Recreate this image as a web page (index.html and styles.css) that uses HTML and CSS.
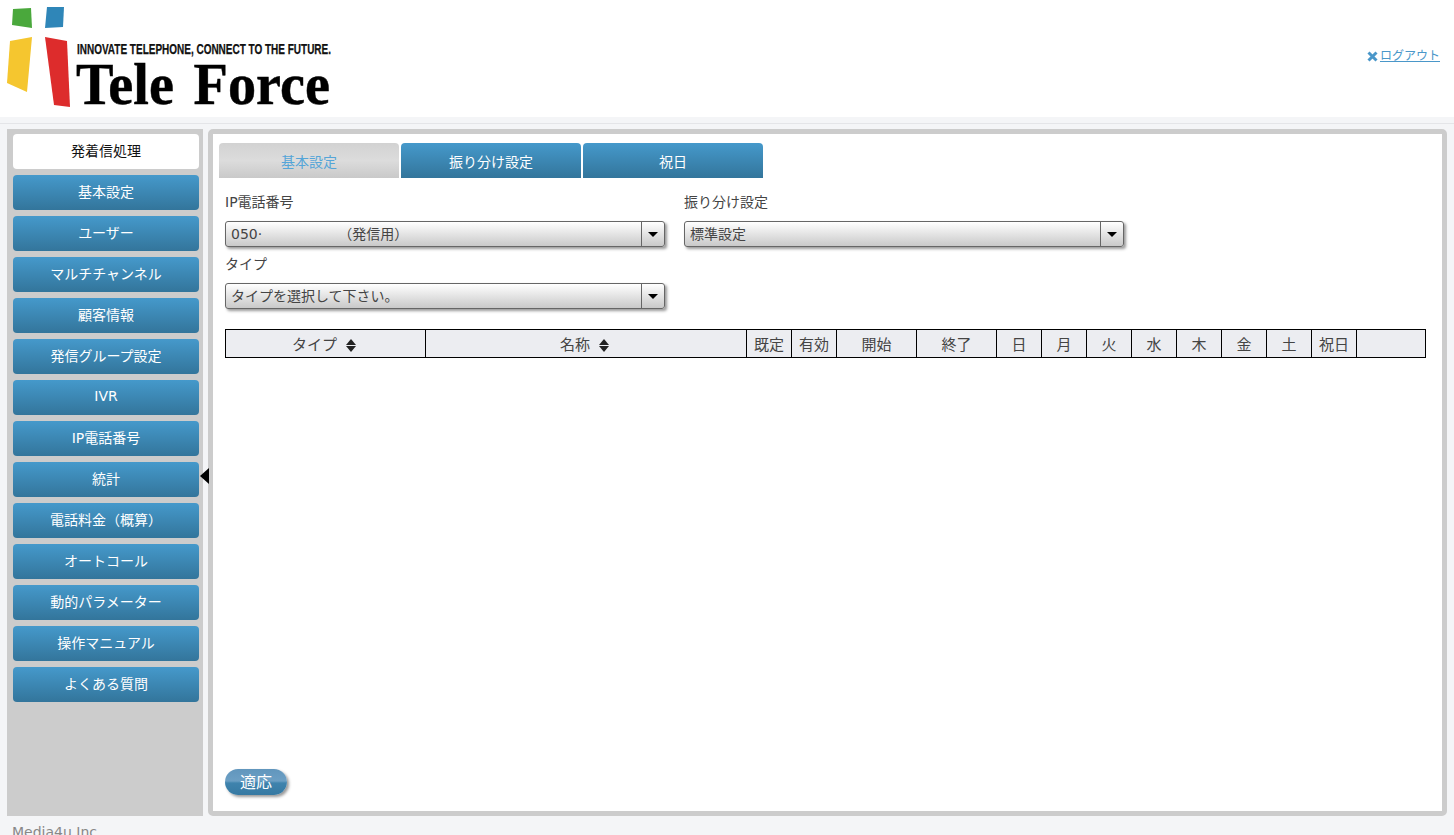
FILE: index.html
```html
<!DOCTYPE html>
<html lang="ja">
<head>
<meta charset="utf-8">
<title>Tele Force</title>
<link rel="stylesheet" href="styles.css">
</head>
<body>
<header class="header">
  <div class="logo">
    <svg class="logo-svg" width="340" height="117" viewBox="0 0 340 117">
      <polygon points="13,9 31,8 32,28 12,25" fill="#4aa83c"/>
      <polygon points="47,7 64,7 63,27 45,28" fill="#2f86b8"/>
      <polygon points="10,41 32,37 27,92 7,83" fill="#f5c62f"/>
      <polygon points="45,37 67,41 70,107 54,105" fill="#dd2c2c"/>
      <text class="logo-tag" x="77" y="54" textLength="254" lengthAdjust="spacingAndGlyphs">INNOVATE TELEPHONE, CONNECT TO THE FUTURE.</text>
      <text class="logo-name" x="76" y="104" textLength="254" lengthAdjust="spacingAndGlyphs">Tele Force</text>
    </svg>
  </div>
  <a class="logout" href="#">
    <svg class="logout-icon" width="11" height="11" viewBox="0 0 11 11"><path d="M1.5 1.5l8 8M9.5 1.5l-8 8" stroke="#4a97c9" stroke-width="3" fill="none"/></svg><span class="logout-text">ログアウト</span>
  </a>
</header>
<div class="strip"></div>
<div class="content">
  <nav class="sidebar">
    <a class="nav-item nav-active">発着信処理</a>
    <a class="nav-item">基本設定</a>
    <a class="nav-item">ユーザー</a>
    <a class="nav-item">マルチチャンネル</a>
    <a class="nav-item">顧客情報</a>
    <a class="nav-item">発信グループ設定</a>
    <a class="nav-item">IVR</a>
    <a class="nav-item">IP電話番号</a>
    <a class="nav-item">統計</a>
    <a class="nav-item">電話料金（概算）</a>
    <a class="nav-item">オートコール</a>
    <a class="nav-item">動的パラメーター</a>
    <a class="nav-item">操作マニュアル</a>
    <a class="nav-item">よくある質問</a>
  </nav>
  <div class="toggle"></div>
  <main class="panel">
    <div class="tabs">
      <a class="tab tab-active">基本設定</a>
      <a class="tab">振り分け設定</a>
      <a class="tab">祝日</a>
    </div>
    <div class="form">
      <div class="form-row">
        <div class="field">
          <label class="label">IP電話番号</label>
          <div class="select"><span class="select-text">050·<span class="select-gap"></span>（発信用）</span><span class="select-btn"><i class="caret"></i></span></div>
        </div>
        <div class="field">
          <label class="label">振り分け設定</label>
          <div class="select"><span class="select-text">標準設定</span><span class="select-btn"><i class="caret"></i></span></div>
        </div>
      </div>
      <div class="field field-second">
        <label class="label">タイプ</label>
        <div class="select"><span class="select-text">タイプを選択して下さい。</span><span class="select-btn"><i class="caret"></i></span></div>
      </div>
    </div>
    <table class="table">
      <thead>
        <tr>
          <th class="c-type">タイプ<span class="sort"><i class="up"></i><i class="down"></i></span></th>
          <th class="c-name">名称<span class="sort"><i class="up"></i><i class="down"></i></span></th>
          <th class="c-s">既定</th>
          <th class="c-s">有効</th>
          <th class="c-m">開始</th>
          <th class="c-m">終了</th>
          <th class="c-s">日</th>
          <th class="c-s">月</th>
          <th class="c-s">火</th>
          <th class="c-s">水</th>
          <th class="c-s">木</th>
          <th class="c-s">金</th>
          <th class="c-s">土</th>
          <th class="c-s">祝日</th>
          <th></th>
        </tr>
      </thead>
    </table>
    <button class="apply">適応</button>
  </main>
</div>
<footer class="footer">Media4u Inc</footer>
</body>
</html>
```
FILE: styles.css
```css
* { box-sizing: border-box; }
html, body { margin: 0; height: 835px; overflow: hidden; }
body {
  background: #f4f5f7;
  color: #444;
  font-family: "DejaVu Sans", "Noto Sans CJK JP", sans-serif;
  font-size: 14px;
  display: flex;
  flex-direction: column;
}
.header {
  height: 117px;
  background: #fff;
  display: flex;
  align-items: flex-start;
  justify-content: space-between;
  flex: none;
}
.logo-svg { display: block; }
.logo-tag {
  font-family: "Liberation Sans Narrow", "Liberation Sans", sans-serif;
  font-weight: 700;
  font-size: 14px;
  fill: #111;
  stroke: #111;
  stroke-width: 0.25px;
}
.logo-name {
  font-family: "Liberation Serif", serif;
  font-weight: 700;
  font-size: 60px;
  word-spacing: 6px;
  fill: #000;
  stroke: #000;
  stroke-width: 0.5px;
}
.logout {
  display: flex;
  align-items: center;
  margin: 47px 14px 0 0;
  color: #4a97c9;
  font-size: 12px;
  line-height: 18px;
}
.logout-icon { margin-right: 2px; }
.logout-text { text-decoration: underline; }
.strip {
  height: 7px;
  flex: none;
  border-bottom: 1px solid #e4e5e8;
}
.content {
  display: flex;
  gap: 5px;
  margin: 5px 7px 0;
  height: 687px;
  flex: none;
  position: relative;
}
.sidebar {
  width: 196px;
  background: #ccc;
  padding: 5px 4px 0 6px;
  display: flex;
  flex-direction: column;
  gap: 6px;
  flex: none;
}
.nav-item {
  height: 35px;
  flex: none;
  display: flex;
  align-items: center;
  justify-content: center;
  padding-bottom: 4px;
  border-radius: 4px;
  color: #fff;
  font-size: 14px;
  background: linear-gradient(#4599cb, #33759b);
}
.nav-active {
  background: #fff;
  color: #111;
}
.toggle {
  position: absolute;
  left: 193px;
  top: 339px;
  width: 0;
  height: 0;
  border-style: solid;
  border-width: 8px 9px 8px 0;
  border-color: transparent #000 transparent transparent;
}
.panel {
  flex: 1;
  background: #fff;
  border: 5px solid #ccc;
  border-radius: 5px;
  padding: 9px 16px 16px 6px;
  display: flex;
  flex-direction: column;
}
.tabs {
  display: flex;
  gap: 2px;
  flex: none;
}
.tab {
  width: 180px;
  height: 35px;
  display: flex;
  align-items: center;
  justify-content: center;
  border-radius: 4px 4px 0 0;
  color: #fff;
  background: linear-gradient(#4599cb, #33759b);
}
.tab-active {
  color: #55a5d8;
  background: linear-gradient(#d2d2d2, #dcdcdc 50%, #c9c9c9);
}
.form {
  padding: 14px 0 0 6px;
  flex: none;
}
.form-row {
  display: flex;
  gap: 19px;
}
.field { width: 440px; }
.field-second { margin-top: 7px; }
.label {
  display: block;
  height: 20px;
  line-height: 20px;
  margin-bottom: 9px;
  color: #444;
}
.select {
  height: 26px;
  display: flex;
  border: 1px solid #666;
  border-radius: 3px;
  background: linear-gradient(#fff, #c9c9c9);
  box-shadow: 2px 2px 3px #999;
}
.select-text {
  flex: 1;
  padding-left: 5px;
  line-height: 24px;
  color: #444;
  white-space: nowrap;
}
.select-gap {
  display: inline-block;
  width: 76px;
}
.select-btn {
  width: 23px;
  flex: none;
  border-left: 1px solid #666;
  display: flex;
  align-items: center;
  justify-content: center;
}
.caret {
  width: 0;
  height: 0;
  border-style: solid;
  border-width: 5px 5px 0;
  border-color: #000 transparent transparent;
}
.table {
  margin: 20px 0 0 6px;
  width: 1201px;
  height: 28px;
  border-collapse: collapse;
  table-layout: fixed;
  flex: none;
}
.table th {
  border: 1px solid #000;
  background: #ecedf1;
  padding: 0;
  height: 28px;
  font-weight: 400;
  font-size: 15px;
  color: #444;
}
.c-type { width: 200px; }
.c-name { width: 321px; }
.c-s { width: 45px; }
.c-m { width: 80px; }
.sort {
  display: inline-flex;
  flex-direction: column;
  gap: 1px;
  margin: 0 3px 0 9px;
  vertical-align: middle;
}
.up, .down {
  width: 0;
  height: 0;
  border-style: solid;
}
.up {
  border-width: 0 5px 6px;
  border-color: transparent transparent #222;
}
.down {
  border-width: 6px 5px 0;
  border-color: #222 transparent transparent;
}
.apply {
  margin: auto 0 0 6px;
  width: 62px;
  height: 26px;
  flex: none;
  padding: 0 0 4px;
  border: 0;
  border-radius: 13px;
  color: #fff;
  font-family: inherit;
  font-size: 16px;
  background: linear-gradient(#6196bd, #6c9fc4 46%, #3f83ad 54%, #3679a2);
  box-shadow: 2px 2px 3px #999;
}
.footer {
  padding: 7px 0 0 12px;
  color: #888;
  font-size: 14px;
  line-height: 18px;
  flex: none;
}
```
